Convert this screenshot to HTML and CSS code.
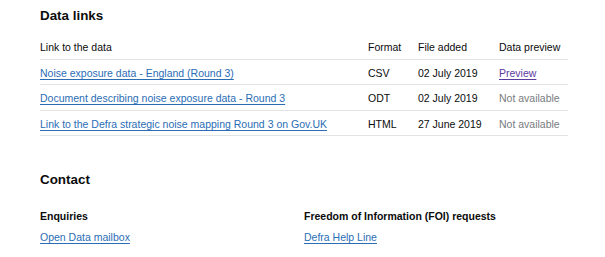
FILE: index.html
```html
<!DOCTYPE html>
<html lang="en">
<head>
<meta charset="utf-8">
<title>Data links</title>
<link rel="stylesheet" href="styles.css">
</head>
<body>
<main class="page">
  <section class="data-links">
    <h2 class="heading">Data links</h2>
    <table class="links-table">
      <thead>
        <tr>
          <th class="col-link">Link to the data</th>
          <th class="col-format">Format</th>
          <th class="col-date">File added</th>
          <th class="col-preview">Data preview</th>
        </tr>
      </thead>
      <tbody>
        <tr>
          <td><a class="link" href="#">Noise exposure data - England (Round 3)</a></td>
          <td>CSV</td>
          <td>02 July 2019</td>
          <td><a class="link visited" href="#">Preview</a></td>
        </tr>
        <tr>
          <td><a class="link" href="#">Document describing noise exposure data - Round 3</a></td>
          <td>ODT</td>
          <td>02 July 2019</td>
          <td class="muted">Not available</td>
        </tr>
        <tr>
          <td><a class="link" href="#">Link to the Defra strategic noise mapping Round 3 on Gov.UK</a></td>
          <td>HTML</td>
          <td>27 June 2019</td>
          <td class="muted">Not available</td>
        </tr>
      </tbody>
    </table>
  </section>
  <section class="contact">
    <h2 class="heading">Contact</h2>
    <div class="contact-grid">
      <div class="contact-item">
        <h3 class="subheading">Enquiries</h3>
        <p class="contact-text"><a class="link" href="#">Open Data mailbox</a></p>
      </div>
      <div class="contact-item">
        <h3 class="subheading">Freedom of Information (FOI) requests</h3>
        <p class="contact-text"><a class="link" href="#">Defra Help Line</a></p>
      </div>
    </div>
  </section>
</main>
</body>
</html>
```

FILE: styles.css
```css
html, body {
  margin: 0;
  padding: 0;
  background: #ffffff;
}
body {
  font-family: "Liberation Sans", Arial, sans-serif;
  font-size: 10.5px;
  line-height: 12.5px;
  color: #0b0c0c;
}
.page {
  width: 528px;
  padding: 8px 0 20px 40px;
}
.heading {
  margin: 0;
  font-size: 13.4px;
  line-height: 16px;
  font-weight: 700;
}
.data-links .heading {
  margin-bottom: 10.5px;
}
.links-table {
  width: 528px;
  table-layout: fixed;
  border-collapse: collapse;
  border-spacing: 0;
}
.links-table th,
.links-table td {
  padding: 6.8px 0 5.2px;
  text-align: left;
  font-weight: 400;
  vertical-align: top;
  border-bottom: 1px solid #e2e3e3;
}
.col-link { width: 328px; }
.col-format { width: 50px; }
.col-date { width: 81px; }
.col-preview { width: 69px; }
.link {
  color: #2a6db5;
  text-decoration-line: underline;
  text-decoration-style: solid;
  text-decoration-thickness: 1px;
  text-decoration-skip-ink: none;
  text-underline-offset: 2px;
}
.link.visited {
  color: #5b3a9e;
}
.muted {
  color: #777c80;
}
.contact {
  margin-top: 35.5px;
}
.contact-grid {
  display: grid;
  grid-template-columns: 264px 264px;
  margin-top: 22px;
}
.subheading {
  margin: 0 0 8.5px;
  font-size: 10.5px;
  line-height: 12.5px;
  font-weight: 700;
}
.contact-text {
  margin: 0;
}
```
